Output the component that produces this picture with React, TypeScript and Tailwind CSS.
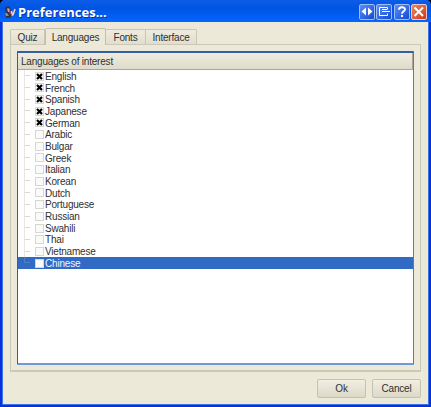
const languages = [
  'English', 'French', 'Spanish', 'Japanese', 'German', 'Arabic', 'Bulgar', 'Greek', 'Italian',
  'Korean', 'Dutch', 'Portuguese', 'Russian', 'Swahili', 'Thai', 'Vietnamese', 'Chinese',
];

function AppIcon() {
  return (
    <svg width="12" height="13" viewBox="0 0 12 13" className="shrink-0">
      <path d="M1 4V2L2.500 .5H5L6.500 2v3L5 6z" fill="#35304f" />
      <path d="M3 2.500h2.500V6H4z" fill="#e3a49b" />
      <path d="M1 6l2-1 4 3 1 1-2 3H2z" fill="#35363a" />
      <path d="M1 7h2l2 3H2z" fill="#8b9098" />
      <path d="M8.500 10L7.500 5M9 9l2-6" stroke="#f3cbbd" strokeWidth="1.6" />
      <path d="M6 6l2 4" stroke="#d5503d" strokeWidth="1" />
    </svg>
  );
}

function TitleButton({ kind }: { kind: 'arrows' | 'restore' | 'help' | 'close' }) {
  const close = kind === 'close';
  return (
    <div className={`h-4 w-4 shrink-0 rounded-[2px] border ${close ? 'border-[#f0c9c5] bg-linear-to-br from-[#ed8562] to-[#cf3510]' : 'border-[#9fbdf4] bg-linear-to-br from-[#5b8df5] to-[#1648d2]'}`}>
      <svg width="14" height="14" viewBox="0 0 14 14" fill="none" stroke="white">
        {kind === 'arrows' && <path d="M6 2.500v8L1.500 6.500zM8 2.500v8l4.500-4z" fill="white" stroke="none" />}
        {kind === 'restore' && <path d="M10.500 4.500V2.500h-8v8h8V8.500M5 6.500h8M5 4.500h5" strokeWidth="1" />}
        {kind === 'help' && <path d="M4 4.800C4 1.400 10 1.400 10 4.500 10 6.300 7 6.400 7 8.800M7 10v2" strokeWidth="1.900" />}
        {kind === 'close' && <path d="M2.500 2.500l8.500 8.500M11 2.500L2.500 11" strokeWidth="2" />}
      </svg>
    </div>
  );
}

function Row({ name, checked, selected }: { name: string; checked: boolean; selected: boolean }) {
  return (
    <div className={`flex h-[11.7px] items-center pl-[6px] ${selected ? 'bg-[#316ac5] text-[#f1f5fc]' : ''}`}>
      <div className={`flex w-[6px] border-l ${selected ? 'h-[6px] self-start border-[#547fbd]' : 'self-stretch border-[#e9e7e0]'}`}>
        <div className={`h-[6px] w-full border-b ${selected ? 'border-[#547fbd]' : 'border-[#dcdad0]'}`} />
      </div>
      <div className="ml-[5px] flex h-[9px] w-[9px] shrink-0 items-center justify-center border border-[#d8d6d0] bg-[#fafaf8]">
        {checked && (
          <svg width="7" height="7" viewBox="0 0 7 7" className="shrink-0">
            <path d="M1 1l5 5M6 1L1 6" stroke="black" strokeWidth="2.200" />
          </svg>
        )}
      </div>
      <span className="ml-[1px] pt-[0.5px] leading-[11px]">{name}</span>
    </div>
  );
}

const tabClass = 'flex h-[15px] items-center justify-center border border-b-0 border-[#c9c6b6] bg-linear-to-b from-[#efecdf] to-[#e1dece]';
const buttonClass = 'flex h-[19px] w-[49px] items-center justify-center rounded-[2px] border border-[#c5c2b2] bg-linear-to-b from-[#f1efe2] to-[#dcd9c9] pb-[1px]';

export default function App() {
  return (
    <div className="h-[407px] w-[431px] bg-black font-['Liberation_Sans',Arial,sans-serif] text-[10px] tracking-[-0.2px] text-[#303030]">
      <div className="flex h-full flex-col overflow-hidden rounded-t-[5px] bg-[#0831d9]">
        <header className="flex h-[22px] shrink-0 items-center bg-linear-to-b from-[#0c5de8] via-[#0054e3] via-40% to-[#0566ff] pt-[2px] pr-[4px] pl-[4px]">
          <AppIcon />
          <h1 className="ml-[2px] grow pb-[1px] font-['Open_Sans','Noto_Sans',sans-serif] text-[13px] leading-[16px] font-bold tracking-[0.02px] text-white [text-shadow:1px_1px_#0b3199]">Preferences...</h1>
          <div className="flex">
            <TitleButton kind="arrows" />
            <div className="w-px" />
            <TitleButton kind="restore" />
            <div className="w-[2px]" />
            <TitleButton kind="help" />
            <div className="w-px" />
            <TitleButton kind="close" />
          </div>
        </header>
        <main className="mx-[2px] mb-[2px] flex grow flex-col border border-t-0 border-[#3c75e8] bg-[#ece9d8] pt-[7px] pr-[7px] pl-[7px]">
          <nav className="relative z-10 flex h-[15px] items-end">
            <div className={`${tabClass} w-[35px] rounded-tl-[2px]`}>Quiz</div>
            <div className="-mb-px flex h-[17px] w-[61px] items-center justify-center rounded-t-[2px] border border-b-0 border-[#c2bfae] bg-[#ece9d8]">Languages</div>
            <div className={`${tabClass} w-[40px] border-l-0`}>Fonts</div>
            <div className={`${tabClass} w-[51px] rounded-tr-[2px] border-l-0`}>Interface</div>
          </nav>
          <section className="h-[328px] border border-b-2 border-[#cbc8ba] py-[6px] pr-[6px] pl-[6px]">
            <div className="h-[314px] rounded-[1px] border-x border-t-2 border-b-2 border-t-[#345da5] border-r-[#4a7cc9] border-b-[#7198d6] border-l-[#345da5] bg-white">
              <div className="flex h-[17px] items-center border-r border-b border-[#aaa797] bg-linear-to-b from-[#f0eddf] to-[#dedbca] pt-[1px] pl-[3px]">Languages of interest</div>
              <div className="pt-[0.25px]">
                {languages.map((name, index) => (
                  <Row key={name} name={name} checked={index < 5} selected={name === 'Chinese'} />
                ))}
              </div>
            </div>
          </section>
          <footer className="mt-[7px] flex justify-end gap-[6px]">
            <button className={buttonClass}>Ok</button>
            <button className={buttonClass}>Cancel</button>
          </footer>
        </main>
      </div>
    </div>
  );
}
